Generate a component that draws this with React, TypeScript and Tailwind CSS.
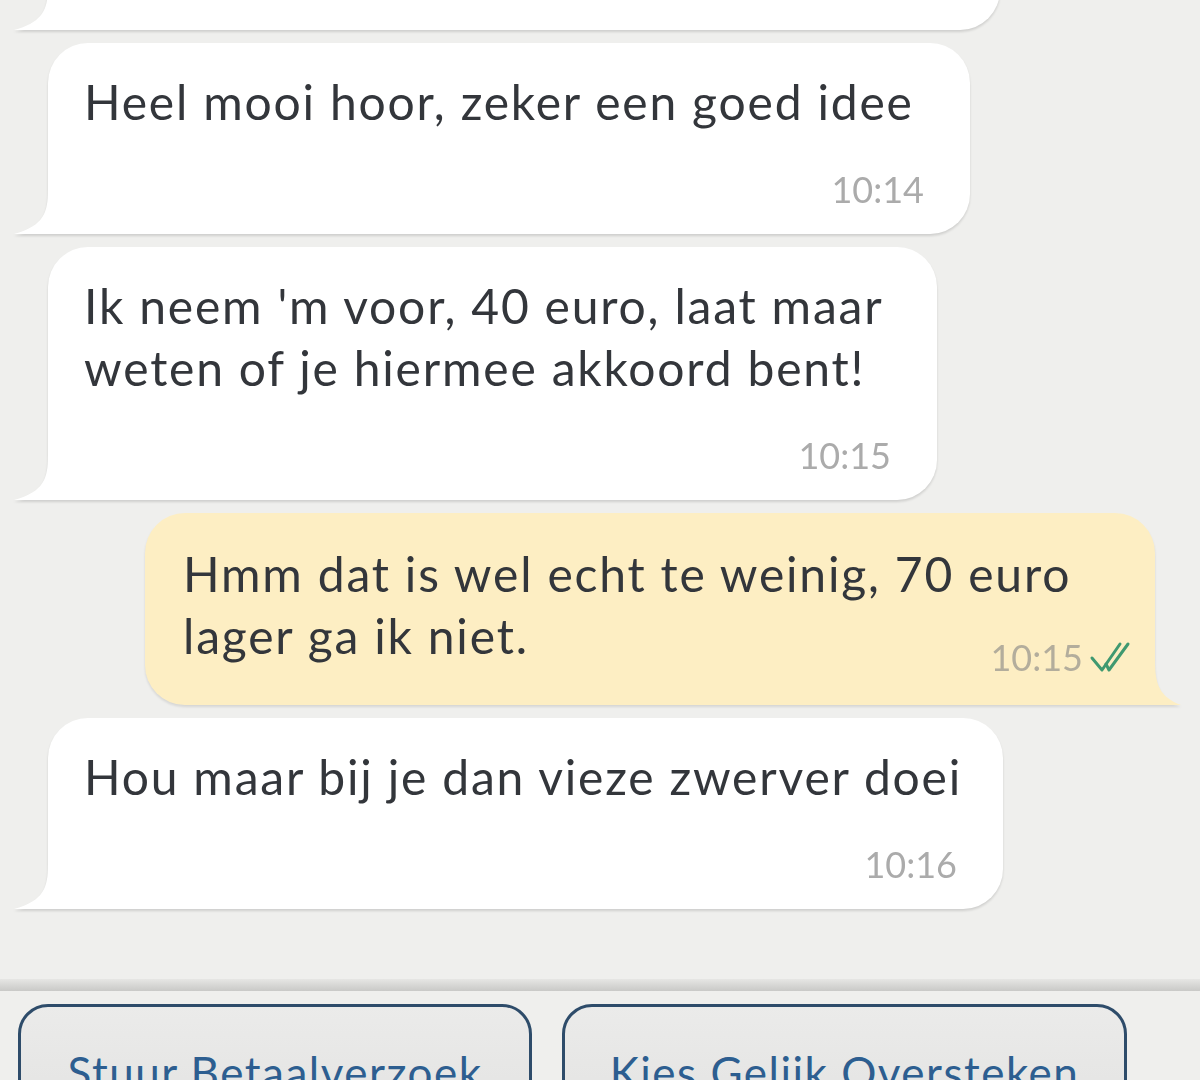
import React from 'react'

const font = { fontFamily: 'Lato, "Noto Sans", sans-serif' }

function TailLeft() {
  return (
    <svg className="absolute bottom-0 -left-[34px]" width="40" height="44" viewBox="0 0 40 44">
      <path d="M34 0 C34 22 30 36 0 44 L40 44 L40 0 Z" fill="#ffffff" />
    </svg>
  )
}

function TailRight() {
  return (
    <svg className="absolute bottom-0 -right-[26px]" width="32" height="44" viewBox="0 0 32 44">
      <path d="M6 0 C6 22 10 36 32 44 L0 44 L0 0 Z" fill="#fdeec3" />
    </svg>
  )
}

function DoubleCheck() {
  return (
    <svg width="42" height="34" viewBox="0 0 42 34" fill="none" stroke="#3f9970" strokeWidth="3" strokeLinecap="round" strokeLinejoin="round">
      <path d="M3 18 L13 30 L31 4" />
      <path d="M17 24 L20 30 L39 4" />
    </svg>
  )
}

function Incoming({ width, lines, time }: { width: number; lines: string[]; time: string }) {
  return (
    <div className="relative ml-[48px] drop-shadow-[0_2px_1px_rgba(0,0,0,0.13)]" style={{ width }}>
      <div className="rounded-[40px] rounded-bl-none bg-white pl-[36px] pr-[46px] pt-[28px] pb-[25px]">
        <div className="text-[48px] leading-[62px] tracking-[1.8px] text-[#33363b] whitespace-nowrap">
          {lines.map((l, i) => (
            <div key={i}>{l}</div>
          ))}
        </div>
        <div className="mt-[36px] flex justify-end text-[36px] leading-[40px] text-[#ababab]">{time}</div>
      </div>
      <TailLeft />
    </div>
  )
}

export default function App() {
  return (
    <div className="h-[1080px] w-[1200px] overflow-hidden bg-[#efefed]" style={font}>
      <div className="flex flex-col gap-[13px]">
        {/* top bubble, cut off */}
        <div className="relative -mt-[70px] ml-[48px] w-[952px] drop-shadow-[0_2px_1px_rgba(0,0,0,0.13)]">
          <div className="h-[100px] rounded-[40px] rounded-bl-none bg-white" />
          <TailLeft />
        </div>

        <Incoming width={922} lines={['Heel mooi hoor, zeker een goed idee']} time="10:14" />
        <Incoming width={889} lines={["Ik neem 'm voor, 40 euro, laat maar", 'weten of je hiermee akkoord bent!']} time="10:15" />

        {/* outgoing */}
        <div className="relative ml-[145px] w-[1010px] drop-shadow-[0_2px_1px_rgba(0,0,0,0.1)]">
          <div className="rounded-[40px] rounded-br-none bg-[#fdeec3] pl-[38px] pr-[24px] pt-[30px] pb-[28px]">
            <div className="text-[48px] leading-[62px] tracking-[1.8px] text-[#33363b] whitespace-nowrap">
              <div>Hmm dat is wel echt te weinig, 70 euro</div>
              <div>lager ga ik niet.</div>
            </div>
            <div className="-mt-[30px] flex items-center justify-end gap-[6px] text-[36px] leading-[40px] text-[#b3ad9c]">
              <span>10:15</span>
              <DoubleCheck />
            </div>
          </div>
          <TailRight />
        </div>

        <Incoming width={955} lines={['Hou maar bij je dan vieze zwerver doei']} time="10:16" />
      </div>

      {/* bottom bar */}
      <div className="mt-[70px] h-[12px] bg-gradient-to-b from-[#e6e6e4] to-[#c9c9c7]" />
      <div className="flex gap-[30px] bg-[#efefed] pl-[18px] pt-[13px]">
        <div className="h-[120px] w-[514px] rounded-[30px] border-[3px] border-[#2e4c6a] bg-gradient-to-b from-[#ebebea] to-[#e3e3e2] pt-[40px] text-center text-[44px] leading-[50px] tracking-[1.5px] text-[#2d5e90]">
          Stuur Betaalverzoek
        </div>
        <div className="h-[120px] w-[565px] rounded-[30px] border-[3px] border-[#2e4c6a] bg-gradient-to-b from-[#ebebea] to-[#e3e3e2] pt-[40px] text-center text-[44px] leading-[50px] tracking-[1.5px] text-[#2d5e90]">
          Kies Gelijk Oversteken
        </div>
      </div>
    </div>
  )
}
